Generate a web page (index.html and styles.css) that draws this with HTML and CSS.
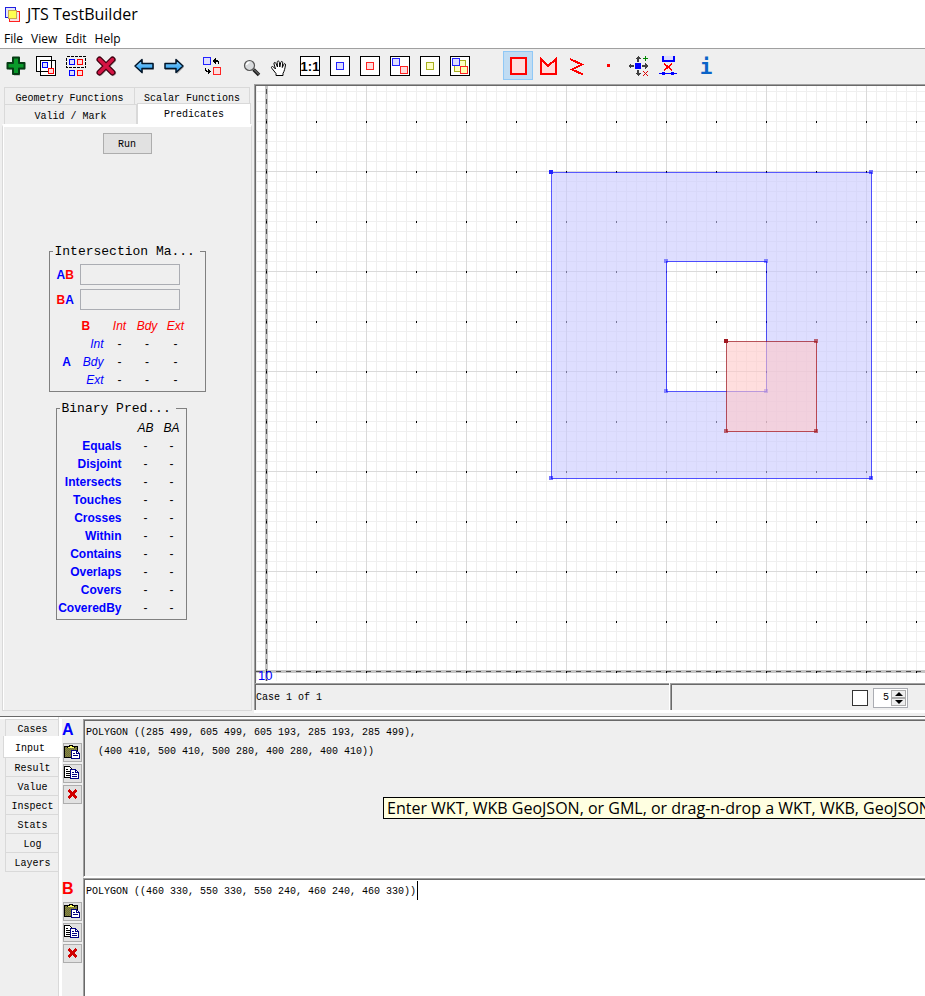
FILE: index.html
```html
<!DOCTYPE html>
<html lang="en">
<head>
<meta charset="utf-8">
<title>JTS TestBuilder</title>
<link rel="stylesheet" href="styles.css">
</head>
<body>
<svg class="defs" width="0" height="0" aria-hidden="true">
  <defs>
    <linearGradient id="sky" x1="0" y1="0" x2="0" y2="1"><stop offset="0" stop-color="#8fd6ff"/><stop offset="1" stop-color="#1c96ee"/></linearGradient>
    <pattern id="weave" width="2" height="2" patternUnits="userSpaceOnUse"><rect width="2" height="2" fill="#8c8c3c"/><rect width="1" height="1" fill="#6c6c40"/><rect x="1" y="1" width="1" height="1" fill="#6c6c40"/></pattern>
    <symbol id="paste" viewBox="0 0 17 17">
      <path d="M.5 2.500h13v11h-13z" fill="url(#weave)" stroke="#000"/>
      <path d="M3 4h8v-1h-2v-2h-4v2h-2z" fill="#000"/>
      <path d="M4 3h6v1h-6zM6 2h2v1h-2z" fill="#ffff60"/>
      <path d="M7.500 6.500h5l3 3v5h-8z" fill="#fff" stroke="#000080"/>
      <path d="M12.500 6.500v3h3M9 9.500h2M9 11.500h5" fill="none" stroke="#000080"/>
    </symbol>
    <symbol id="copy" viewBox="0 0 17 17">
      <path d="M.5 1.500h5l3 3v8h-8z" fill="#fff" stroke="#000"/>
      <path d="M2 4.500h2M2 6.500h4M2 8.500h4M2 10.500h4" stroke="#000"/>
      <path d="M6.500 4.500h5l3 3v6h-8z" fill="#fff" stroke="#000080"/>
      <path d="M11.500 4.500v3h3M8 7.500h2M8 9.500h5M8 11.500h5" fill="none" stroke="#000080"/>
    </symbol>
    <symbol id="erase" viewBox="0 0 17 17"><path d="M4.500 4l8 8M12.500 4l-8 8" stroke="#d00000" stroke-width="2.500"/></symbol>
  </defs>
</svg>
<div class="app">
  <header class="titlebar">
    <svg class="appicon" width="15" height="15" viewBox="0 0 15 15" shape-rendering="crispEdges">
      <path d="M.5.500h10v10h-10z" fill="#e4e4f8" stroke="#2020e0"/>
      <path d="M4.500 4.500h10v10h-10z" fill="#f8e0e0" stroke="#ff2020"/>
      <path d="M3 3h9v9h-9z" fill="#c8a850"/>
      <path d="M4 4h7v7h-7z" fill="#ffff50"/>
    </svg>
    <span>JTS TestBuilder</span>
  </header>
  <nav class="menubar"><a href="#file">File</a><a href="#view">View</a><a href="#edit">Edit</a><a href="#help">Help</a></nav>

  <div class="toolbar">
    <div class="group">
      <button aria-label="New case"><svg class="smooth" viewBox="0 0 20 20"><path d="M7 2h6v5h5v6h-5v6h-6v-6h-5v-6h5z" fill="#999" opacity=".5" transform="translate(1 1)"/><path d="M7 1.500h6v5.500h5.500v5.500h-5.500v5.500h-6v-5.500h-5.500v-5.500h5.500z" fill="#0a9a2a" stroke="#063c14" stroke-width="2" stroke-linejoin="round"/></svg></button>
      <button aria-label="Copy case"><svg viewBox="0 0 20 20"><path d="M.5.500h15v15h-15zM4.500 4.500h15v15h-15z" fill="#fff" stroke="#000"/><path d="M6.500 6.500h5v5h-5z" fill="#dcdcff" stroke="#00f"/><path d="M12.500 12.500h5v5h-5z" fill="#ffdcdc" stroke="red"/></svg></button>
      <button aria-label="Copy geometry"><svg viewBox="0 0 20 20"><path d="M.5.500h19v11h-19z" fill="none" stroke="#000" stroke-dasharray="3 1"/><path d="M3.500 3.500h5v5h-5zM3.500 14.500h5v5h-5z" fill="#dcdcff" stroke="#00f"/><path d="M11.500 3.500h5v5h-5zM11.500 14.500h5v5h-5z" fill="#ffdcdc" stroke="red"/></svg></button>
      <button aria-label="Delete case"><svg class="smooth" viewBox="0 0 20 20"><path d="M4 4l13 13M17 4l-13 13" stroke="#aaa" stroke-width="6" stroke-linecap="round"/><path d="M3.500 3.500l13 13M16.500 3.500l-13 13" stroke="#400010" stroke-width="6" stroke-linecap="round"/><path d="M3.500 3.500l13 13M16.500 3.500l-13 13" stroke="#d41444" stroke-width="3.500" stroke-linecap="round"/></svg></button>
    </div>
    <div class="group">
      <button aria-label="Previous case"><svg class="smooth" viewBox="0 0 20 20"><path d="M2 11l7-7v4h11v6h-11v4z" fill="#aaa"/><path d="M1 10l7-6.500v4h11v5h-11v4z" fill="url(#sky)" stroke="#001428" stroke-width="1.500" stroke-linejoin="round"/></svg></button>
      <button aria-label="Next case"><svg class="smooth" viewBox="0 0 20 20"><path d="M20 11l-7-7v4h-12v6h12v4z" fill="#aaa"/><path d="M19 10l-7-6.500v4h-11v5h11v4z" fill="url(#sky)" stroke="#001428" stroke-width="1.500" stroke-linejoin="round"/></svg></button>
    </div>
    <div class="group">
      <button aria-label="Exchange A and B"><svg viewBox="0 0 20 20"><path d="M1.500 1.500h7v7h-7z" fill="#dcdcff" stroke="#22f"/><path d="M11.500 11.500h7v7h-7z" fill="#ffdcdc" stroke="#f22"/><path d="M11 4h1v-1h1v-1h1v2h2v1h1v3h-1v-2h-2v2h-1v-1h-1v-1h-1zM9 15h-1v-1h-1v-1h-1v2h-1v-1h-1v-2h-1v3h1v1h2v2h1v-1h1v-1h1z" fill="#000"/></svg></button>
    </div>
    <div class="group">
      <button aria-label="Zoom"><svg class="smooth" viewBox="0 0 20 20"><path d="M13.500 13.500l5.500 5.500" stroke="#222" stroke-width="3.500"/><path d="M14 13.500l5 5" stroke="#888" stroke-width="1"/><circle cx="9.500" cy="9.500" r="5" fill="#d8dadc" stroke="#555" stroke-width="1.200"/><path d="M6.500 9a3 3 0 0 1 3-2.500" stroke="#fff" stroke-width="1.500" fill="none"/></svg></button>
      <button aria-label="Pan"><svg class="smooth" viewBox="0 0 20 20"><path d="M6 19.500v-2l-4-5c-1.500-2 .5-2.500 1.500-1.500l2 2-1.500-5c-.4-2 1.500-2 2-.5l1.500 3.500-.3-4.500c0-2 2-2 2.200 0l.4 4.500.9-4.500c.4-1.500 2-1.300 2 .2l-.4 4.800 1.400-3c.6-1.500 2-1 1.800.4-.5 3-1 6-2.500 8.500v2.100z" fill="#fff" stroke="#000" stroke-width="1" stroke-linejoin="round"/></svg></button>
      <button aria-label="Zoom 1:1"><svg viewBox="0 0 20 20"><path d="M.5.500h19v19h-19z" fill="#fff" stroke="#000"/><text class="ratio" x="10" y="15" text-anchor="middle">1:1</text></svg></button>
      <button aria-label="Zoom to A"><svg viewBox="0 0 20 20"><path d="M.5.500h19v19h-19z" fill="#fff" stroke="#000"/><path d="M6.500 6.500h7v7h-7z" fill="#dcdcff" stroke="#22f"/></svg></button>
      <button aria-label="Zoom to B"><svg viewBox="0 0 20 20"><path d="M.5.500h19v19h-19z" fill="#fff" stroke="#000"/><path d="M6.500 6.500h7v7h-7z" fill="#ffdcdc" stroke="#f22"/></svg></button>
      <button aria-label="Zoom to input"><svg viewBox="0 0 20 20"><path d="M.5.500h19v19h-19z" fill="#fff" stroke="#000"/><path d="M2.500 2.500h7v7h-7z" fill="#dcdcff" stroke="#22f"/><path d="M10.500 10.500h7v7h-7z" fill="#ffdcdc" stroke="#f22"/></svg></button>
      <button aria-label="Zoom to result"><svg viewBox="0 0 20 20"><path d="M.5.500h19v19h-19z" fill="#fff" stroke="#000"/><path d="M6.500 6.500h7v7h-7z" fill="#ffffc0" stroke="#a8b020"/></svg></button>
      <button aria-label="Zoom to all"><svg viewBox="0 0 20 20"><path d="M.5.500h19v19h-19z" fill="#fff" stroke="#000"/><path d="M8.500 4.500h7v7h-4v4h-7v-7h4z" fill="#ffffc0" stroke="#a8b020"/><path d="M2.500 2.500h7v7h-7z" fill="#dcdcff" stroke="#22f"/><path d="M10.500 10.500h7v7h-7z" fill="#ffffb0" stroke="#f22"/></svg></button>
    </div>
    <div class="group draw">
      <button class="on" aria-label="Draw rectangle"><svg viewBox="0 0 20 20"><path d="M3 2h15v16h-15z" fill="#ffdcdc" stroke="red" stroke-width="2"/></svg></button>
      <button aria-label="Draw polygon"><svg viewBox="0 0 20 20"><path d="M3 18v-15l7 7 8-7v15z" fill="#ffdcdc" stroke="red" stroke-width="2"/></svg></button>
      <button aria-label="Draw line"><svg viewBox="0 0 20 20"><path d="M2 3l12 5.500-10 5 11 5" fill="none" stroke="red" stroke-width="2"/></svg></button>
      <button aria-label="Draw point"><svg viewBox="0 0 20 20"><path d="M9 8h3v3h-3z" fill="red"/></svg></button>
      <button aria-label="Move vertex"><svg viewBox="0 0 20 20"><path d="M7 7h6v6h-6z" fill="#00f"/><path d="M10 0l3 3h-2v3h-2v-3h-2zM10 20l3-3h-2v-3h-2v3h-2zM0 10l3-3v2h3v2h-3v2zM20 10l-3-3v2h-3v2h3v2z" fill="#404040"/><path d="M15 2.500h5M17.500 0v5" stroke="#080"/><path d="M15 15l5 5M20 15l-5 5" stroke="#d00"/></svg></button>
      <button aria-label="Extract component"><svg viewBox="0 0 20 20"><path d="M5 0h11v5h-11z" fill="#dcdcff"/><path d="M5 0v5h11v-5" fill="none" stroke="#00f" stroke-width="2"/><path d="M6 7.500l8.500 7M14.500 7.500l-8.500 7" stroke="red" stroke-width="1.500"/><path d="M1 17.500h18" stroke="#00f"/><path d="M4 16h3v3h-3zM13 16h3v3h-3z" fill="#00f"/></svg></button>
    </div>
    <div class="group">
      <button aria-label="Info"><svg viewBox="0 0 20 20"><text class="info" x="10" y="18" text-anchor="middle">i</text></svg></button>
    </div>
  </div>

  <main class="work">
    <aside class="side">
      <div class="tabs" role="tablist">
        <button role="tab">Geometry Functions</button><button role="tab">Scalar Functions</button>
        <button role="tab">Valid / Mark</button><button role="tab" class="sel" aria-selected="true">Predicates</button>
      </div>
      <div class="tabbody">
        <button class="run">Run</button>
        <fieldset class="matrix">
          <legend>Intersection Ma...</legend>
          <div class="code"><label for="ab"><span class="a">A</span><span class="b">B</span></label><input id="ab" type="text" readonly></div>
          <div class="code"><label for="ba"><span class="b">B</span><span class="a">A</span></label><input id="ba" type="text" readonly></div>
          <table>
            <colgroup><col class="ca"><col class="cl"><col class="c1"><col class="c2"><col class="c3"></colgroup>
            <tr class="b"><td></td><th class="name">B</th><td class="it">Int</td><td class="it">Bdy</td><td class="it">Ext</td></tr>
            <tr><td></td><td class="row a it">Int</td><td>-</td><td>-</td><td>-</td></tr>
            <tr><th class="a">A</th><td class="row a it">Bdy</td><td>-</td><td>-</td><td>-</td></tr>
            <tr><td></td><td class="row a it">Ext</td><td>-</td><td>-</td><td>-</td></tr>
          </table>
        </fieldset>
        <fieldset class="preds">
          <legend>Binary Pred...</legend>
          <table>
            <colgroup><col class="pl"><col class="p1"><col class="p2"></colgroup>
            <tr class="it"><td></td><td>AB</td><td>BA</td></tr>
            <tr><th>Equals</th><td>-</td><td>-</td></tr>
            <tr><th>Disjoint</th><td>-</td><td>-</td></tr>
            <tr><th>Intersects</th><td>-</td><td>-</td></tr>
            <tr><th>Touches</th><td>-</td><td>-</td></tr>
            <tr><th>Crosses</th><td>-</td><td>-</td></tr>
            <tr><th>Within</th><td>-</td><td>-</td></tr>
            <tr><th>Contains</th><td>-</td><td>-</td></tr>
            <tr><th>Overlaps</th><td>-</td><td>-</td></tr>
            <tr><th>Covers</th><td>-</td><td>-</td></tr>
            <tr><th>CoveredBy</th><td>-</td><td>-</td></tr>
          </table>
        </fieldset>
      </div>
    </aside>

    <section class="view">
      <div class="canvas sunken">
        <svg width="100%" height="100%" shape-rendering="crispEdges">
          <defs>
            <pattern id="minor" x="6" y="1" width="10" height="10" patternUnits="userSpaceOnUse"><path d="M0 0h10v1h-9v9h-1z" fill="#efefef"/></pattern>
            <pattern id="major" x="66" y="71" width="100" height="100" patternUnits="userSpaceOnUse"><path d="M0 0h100v1h-99v99h-1z" fill="#dadada"/></pattern>
            <pattern id="dots" x="16" y="21" width="50" height="50" patternUnits="userSpaceOnUse"><path d="M0 0h1v2h-1z" fill="#000"/></pattern>
          </defs>
          <g transform="translate(-256 -86)">
            <rect x="256" y="86" width="4000" height="595" fill="url(#minor)"/>
            <rect x="256" y="86" width="4000" height="595" fill="url(#major)"/>
            <path d="M265 86h3v595h-3zM256 670h4000v3h-4000z" fill="#c4c4c4"/>
            <path d="M266.500 89v592M256 671.500h4000" stroke="#505050" stroke-dasharray="5"/>
            <rect x="256" y="86" width="4000" height="595" fill="url(#dots)"/>
            <text class="scale" x="258" y="680">10</text>
            <path d="M551.500 172.500h320v306h-320zM666.500 261.500v130h100v-130z" fill="#c8c8ff" fill-opacity=".6" fill-rule="evenodd" stroke="#00f" stroke-opacity=".65"/>
            <path d="M869 170h4v4h-4zM869 476h4v4h-4zM549 476h4v4h-4z" fill="#00f" fill-opacity=".55"/>
            <path d="M664 259h4v4h-4zM764 259h4v4h-4zM664 389h4v4h-4zM764 389h4v4h-4z" fill="#00f" fill-opacity=".4"/>
            <path d="M549 170h4v4h-4z" fill="#22f"/>
            <path d="M726.500 341.500h90v90h-90z" fill="#ffc8c8" fill-opacity=".6" stroke="#a01018" stroke-opacity=".7"/>
            <path d="M814 339h4v4h-4zM814 429h4v4h-4zM724 429h4v4h-4z" fill="#a01018" fill-opacity=".6"/>
            <path d="M724 339h4v4h-4z" fill="#a01820"/>
          </g>
        </svg>
      </div>
      <div class="status">
        <div class="cell sunken">Case 1 of 1</div>
        <div class="cell end sunken">
          <input class="check" type="checkbox" aria-label="Show magnified topology">
          <div class="spin">
            <input type="text" value="5" aria-label="Magnify factor">
            <div><button aria-label="Increase"><svg width="8" height="4"><path d="M4 0l4 4h-8z"/></svg></button><button aria-label="Decrease"><svg width="8" height="4"><path d="M0 0h8l-4 4z"/></svg></button></div>
          </div>
        </div>
      </div>
    </section>
  </main>

  <section class="bottom">
    <div class="vtabs" role="tablist">
      <button role="tab">Cases</button><button role="tab" class="sel" aria-selected="true">Input</button><button role="tab">Result</button><button role="tab">Value</button><button role="tab">Inspect</button><button role="tab">Stats</button><button role="tab">Log</button><button role="tab">Layers</button>
    </div>
    <div class="geoms">
      <div class="geom first">
        <div class="tools"><label class="a" for="wkta">A</label>
          <button aria-label="Paste A"><svg><use href="#paste"/></svg></button><button aria-label="Copy A"><svg><use href="#copy"/></svg></button><button aria-label="Clear A"><svg><use href="#erase"/></svg></button></div>
        <div class="editor sunken"><textarea id="wkta" spellcheck="false">POLYGON ((285 499, 605 499, 605 193, 285 193, 285 499),
  (400 410, 500 410, 500 280, 400 280, 400 410))</textarea>
          <div class="tip" role="tooltip">Enter WKT, WKB GeoJSON, or GML, or drag-n-drop a WKT, WKB, GeoJSON</div></div>
      </div>
      <div class="geom second">
        <div class="tools"><label class="b" for="wktb">B</label>
          <button aria-label="Paste B"><svg><use href="#paste"/></svg></button><button aria-label="Copy B"><svg><use href="#copy"/></svg></button><button aria-label="Clear B"><svg><use href="#erase"/></svg></button></div>
        <div class="editor sunken"><textarea id="wktb" spellcheck="false">POLYGON ((460 330, 550 330, 550 240, 460 240, 460 330))</textarea><span class="caret"></span></div>
      </div>
    </div>
  </section>
</div>
</body>
</html>
```
FILE: styles.css
```css
* { box-sizing: border-box; }
body { margin: 0; background: #efefef; color: #000; overflow: hidden; }
button, input, textarea { font: inherit; color: inherit; margin: 0; padding: 0; border: 0; background: none; border-radius: 0; }
svg { display: block; }
.defs { position: absolute; }
.app { display: flex; flex-direction: column; height: 100vh; font: 10px/12px "Liberation Mono", monospace; }
.a { color: #00f; }
.b { color: #f00; }
.it { font-style: italic; }
.sunken { border: solid #a0a0a0; border-width: 1px 0 0 1px; padding: 1px 0 0 1px; box-shadow: inset 1px 1px #696969; }

.titlebar { display: flex; align-items: center; gap: 7px; height: 30px; padding: 0 0 2px 5px; background: #fff; font: 16px/20px "Open Sans", sans-serif; }
.menubar { display: flex; gap: 8px; height: 18px; padding-left: 4px; background: #fff; font: 12px/17px "Open Sans", sans-serif; }
.menubar a { color: #000; text-decoration: none; }

.toolbar { display: flex; gap: 8px; height: 36px; padding: 2px 0 0 1px; border-top: 1px solid #a0a0a0; }
.group { display: flex; }
.draw { margin-left: 20px; }
.toolbar button { width: 30px; height: 29px; padding: 5px; }
.toolbar svg { width: 20px; height: 20px; overflow: visible; shape-rendering: crispEdges; }
.toolbar svg.smooth { shape-rendering: auto; }
.toolbar .on { background: #c0dcf3; box-shadow: inset 0 0 0 1px #90c8f6; }
.ratio { font: bold 13px "Liberation Sans", sans-serif; }
.info { font: bold 21px "DejaVu Sans Mono", monospace; fill: #0a64c8; }

.work { display: flex; flex: 630 1 0; min-height: 0; }
.side { display: flex; flex-direction: column; flex: 0 0 254px; padding: 3px 2px 2px 2px; }
.tabs { display: grid; grid-template-columns: 131px 2px 1fr; grid-template-rows: 17px 20px; padding: 0 1px 0 2px; }
.tabs button { height: 17px; padding-top: 5px; border: 1px solid #d9d9d9; border-bottom: 0; line-height: 12px; overflow: hidden; }
.tabs button:nth-child(2) { grid-column: 2 / 4; margin-right: 1px; border-left: 0; }
.tabs button:nth-child(3) { grid-column: 1 / 3; height: 20px; }
.tabs .sel { grid-column: 3; height: 21px; margin-top: -1px; padding-top: 2px; background: #fff; }
.tabbody { display: flex; flex-direction: column; align-items: center; flex: 1; border: 1px solid #d9d9d9; border-top: 3px solid #fff; box-shadow: inset 1px 0 #fff; }
.run { width: 49px; height: 21px; margin: 6px 0 89px; padding-top: 2px; border: 1px solid #adadad; background: #e1e1e1; }
fieldset { margin: 0 0 8px; padding: 0 4px; border: 1px solid #808080; font: 12px/18px "Liberation Sans", sans-serif; }
legend { margin-left: -1px; padding: 1px 5px 0 2px; font: 13px/16px "Liberation Mono", monospace; white-space: nowrap; }
.matrix { width: 157px; }
.code { display: flex; align-items: center; height: 25px; padding-left: 3px; font-weight: bold; }
.code:first-of-type { margin-top: 2px; }
.code label { display: flex; width: 18px; margin-right: 5px; }
.code input { width: 100px; height: 21px; border: 1px solid #abadb3; }
table { table-layout: fixed; border-collapse: collapse; }
td, th { height: 18px; padding: 0; text-align: center; }
.matrix table { width: 137px; margin: 5px 0 2px; }
.ca, .cl { width: 26px; }
.c1 { width: 28px; }
.c2 { width: 27px; }
.c3 { width: 30px; }
.matrix .name { padding-left: 2px; text-align: left; }
.matrix .row { padding-right: 2px; text-align: right; }
.preds { width: 131px; margin-right: 12px; padding: 0 0 2px 4px; }
.preds table { width: 124px; margin-top: 2px; }
.pl { width: 72px; }
.p1, .p2 { width: 26px; }
.preds th { padding-right: 11px; color: #00f; text-align: right; white-space: nowrap; direction: rtl; }

.view { display: flex; flex-direction: column; flex: 1; min-width: 0; }
.canvas { flex: 1; min-height: 0; overflow: hidden; background: #fff; }
.scale { font: 13px "Liberation Sans", sans-serif; fill: #00f; }
.status { display: grid; grid-template-columns: 415fr 255fr; height: 30px; background: #fff; gap: 1px; }
.cell { display: flex; align-items: center; margin-bottom: 3px; background: #efefef; }
.end { justify-content: flex-end; gap: 5px; padding-right: 17px; }
.check { appearance: none; width: 16px; height: 16px; border: 1px solid #333; background: #fff; }
.spin { display: flex; width: 35px; height: 20px; padding: 1px; border: 1px solid #abadb3; background: #fff; }
.spin input { flex: 1; width: 16px; text-align: right; padding-right: 2px; }
.spin div { width: 15px; }
.spin button { display: flex; align-items: center; justify-content: center; width: 15px; height: 8px; border: 1px solid #adadad; background: #efefef; }

.bottom { display: flex; flex: 279 1 0; min-height: 0; margin-top: 3px; border-top: 1px solid #696969; box-shadow: inset 0 2px #fff; }
.vtabs { display: flex; flex-direction: column; width: 62px; padding: 2px 0 0 5px; border-right: 3px solid #fff; background: linear-gradient(#d9d9d9, #d9d9d9) right 0 top 0 / 1px 100% no-repeat; }
.vtabs button { width: 54px; height: 19px; border: 1px solid #d9d9d9; border-top: 0; border-right: 0; padding-top: 4px; line-height: 12px; }
.vtabs button:first-child { height: 17px; border-top: 1px solid #d9d9d9; border-bottom: 0; }
.vtabs .sel { width: 57px; height: 22px; margin-left: -2px; padding-right: 4px; background: #fff; }
.geoms { display: flex; flex-direction: column; flex: 1; min-width: 0; padding-top: 2px; }
.geom { display: flex; min-height: 0; }
.first { flex: 159 1 0; }
.second { flex: 118 1 0; }
.tools { display: flex; flex-direction: column; gap: 2px; width: 21px; padding: 2px 0 0 1px; }
.tools label { height: 20px; margin-left: -1px; font: bold 16px/18px "Liberation Sans", sans-serif; }
.tools button { width: 19px; height: 19px; padding: 0; border: 1px solid #adadad; background: #e1e1e1; }
.tools svg { width: 17px; height: 17px; shape-rendering: crispEdges; }
.editor { position: relative; flex: 1; min-width: 0; }
.editor textarea { display: block; width: 100%; height: 100%; padding: 2px 1px; resize: none; outline: 0; overflow: hidden; line-height: 19px; white-space: pre; }
.first .editor { border-bottom: 2px solid #fff; }
.second .editor { background: #fff; }
.caret { position: absolute; left: 333px; top: 2px; width: 1px; height: 19px; background: #000; }
.tip { position: absolute; left: 299px; right: -8px; top: 77px; height: 22px; padding-left: 3px; border: 1px solid #000; background: #ffffe1; font: 16px/20px "Open Sans", sans-serif; white-space: nowrap; }
```
